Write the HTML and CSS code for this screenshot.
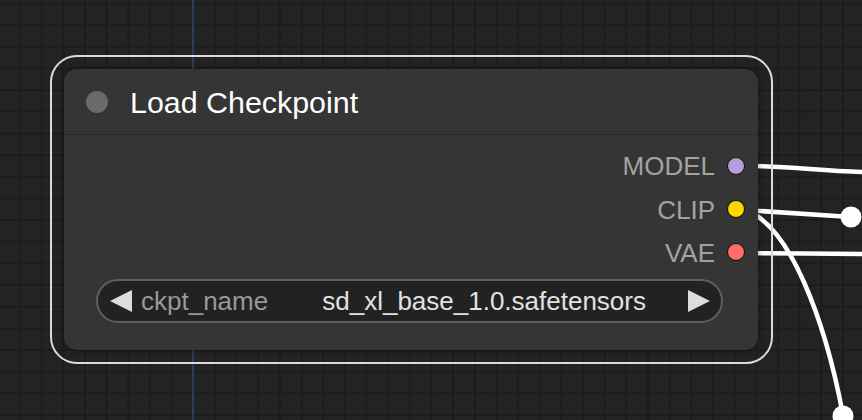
FILE: index.html
```html
<!DOCTYPE html>
<html>
<head>
<meta charset="utf-8">
<link rel="stylesheet" href="styles.css">
</head>
<body>
<div class="canvas">
  <svg class="links" width="862" height="420" viewBox="0 0 862 420">
    <g fill="none" stroke="#ffffff" stroke-width="4.5" stroke-linecap="round">
      <path d="M745 166 C 790 166, 820 171, 866 172"/>
      <path d="M745 210 L 851 217"/>
      <path d="M745 210 C 790 225, 825 320, 843 415"/>
      <path d="M745 253 C 790 253, 820 254, 866 254"/>
    </g>
    <circle cx="851" cy="217" r="10.5" fill="#ffffff"/>
    <circle cx="843" cy="416" r="10.5" fill="#ffffff"/>
  </svg>
  <div class="outline"></div>
  <div class="node">
    <div class="title">
      <span class="title-dot"></span>
      <span class="title-text">Load Checkpoint</span>
    </div>
    <div class="body">
      <div class="slot"><span class="slot-label">MODEL</span><span class="slot-dot model"></span></div>
      <div class="slot"><span class="slot-label">CLIP</span><span class="slot-dot clip"></span></div>
      <div class="slot"><span class="slot-label">VAE</span><span class="slot-dot vae"></span></div>
      <div class="widget">
        <svg class="arrow" width="22" height="22" viewBox="0 0 22 22"><polygon points="22,0 22,22 0,11" fill="#dddddd"/></svg>
        <span class="w-label">ckpt_name</span>
        <span class="w-spacer"></span>
        <span class="w-value">sd_xl_base_1.0.safetensors</span>
        <svg class="arrow arrow-r" width="22" height="22" viewBox="0 0 22 22"><polygon points="0,0 0,22 22,11" fill="#dddddd"/></svg>
      </div>
    </div>
  </div>
</div>
</body>
</html>
```

FILE: styles.css
```css
html, body {
  margin: 0;
  padding: 0;
  background: #232323;
}
.canvas {
  position: relative;
  width: 862px;
  height: 420px;
  overflow: hidden;
  background-color: #232323;
  background-image:
    linear-gradient(to right, transparent 0, transparent 192px, #2c3d5c 192px, #2c3d5c 194px, transparent 194px),
    linear-gradient(to right, #1c1c1c 0, #1c1c1c 2px, transparent 2px),
    linear-gradient(to bottom, #1c1c1c 0, #1c1c1c 2px, transparent 2px);
  background-size: 862px 420px, 21.67px 21.67px, 21.67px 21.67px;
  background-position: 0 0, 19px 0, 0 2.5px;
  background-repeat: no-repeat, repeat, repeat;
  font-family: "Liberation Sans", Arial, sans-serif;
}
.links {
  position: absolute;
  left: 0;
  top: 0;
}
.outline {
  position: absolute;
  left: 50px;
  top: 55px;
  width: 719px;
  height: 305px;
  border: 2px solid #dcdcdc;
  border-radius: 27px;
}
.node {
  position: absolute;
  left: 64px;
  top: 69px;
  width: 694px;
  height: 281px;
  background: #353535;
  border-radius: 13px;
  box-shadow: 0 0 6px rgba(0, 0, 0, 0.45);
  display: flex;
  flex-direction: column;
}
.title {
  height: 65px;
  border-bottom: 1px solid #2a2a2a;
  display: flex;
  align-items: center;
  padding-left: 22px;
  box-sizing: content-box;
}
.title-dot {
  width: 22px;
  height: 22px;
  border-radius: 50%;
  background: #6a6a6a;
}
.title-text {
  margin-left: 22px;
  color: #ffffff;
  font-size: 30.4px;
  line-height: 1;
  margin-top: 1px;
}
.body {
  padding-top: 9px;
  display: flex;
  flex-direction: column;
}
.slot {
  height: 43.4px;
  display: flex;
  align-items: center;
  justify-content: flex-end;
  padding-right: 13px;
}
.slot-label {
  color: #a3a3a3;
  font-size: 26px;
  line-height: 1;
  margin-right: 12px;
  margin-top: 1px;
}
.slot-dot {
  width: 16px;
  height: 16px;
  border-radius: 50%;
  border: 1.5px solid #0a0a0a;
}
.model { background: #b39ddb; }
.clip { background: #ffd500; }
.vae { background: #ff6e6e; }
.widget {
  margin: 5px 35px 0 32px;
  height: 40px;
  border: 2px solid #5f5f5f;
  border-radius: 22px;
  background: #222222;
  display: flex;
  align-items: center;
  padding: 0 11px 0 12px;
}
.arrow {
  display: block;
  flex: none;
}
.w-label {
  margin-left: 9px;
  color: #999999;
  font-size: 26px;
  line-height: 1;
}
.w-spacer {
  flex: 1;
}
.w-value {
  color: #e2e2e2;
  font-size: 26px;
  line-height: 1;
  margin-right: 42px;
}
```
